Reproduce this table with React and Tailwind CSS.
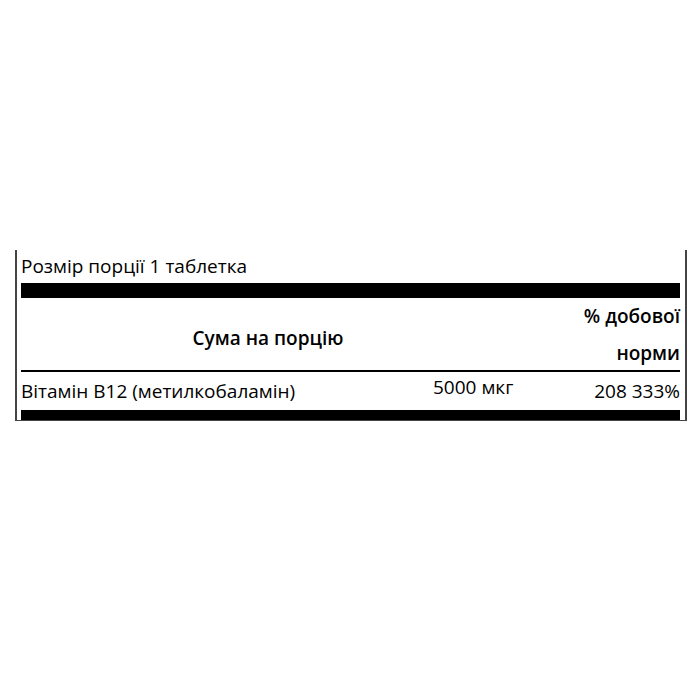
export default function App() {
  return (
    <div className="w-[700px] h-[700px] bg-white text-black overflow-hidden" style={{ fontFamily: '"Open Sans", "Noto Sans", sans-serif' }}>
      <div className="ml-[15px] mt-[250px] w-[672px] border-l-2 border-r-2 border-b border-[#444] pl-[4px] pr-[5px]">
        <div className="h-[33px] flex items-center text-[19px]">Розмір порції 1 таблетка</div>
        <div className="h-[15px] bg-black"></div>
        <div className="grid grid-cols-[494px_165px] h-[72px]">
          <div className="flex items-center justify-center font-semibold text-[19px] pt-[6px]">Сума на порцію</div>
          <div className="text-right font-semibold text-[19px] leading-[37px]">
            % добової
            <br />
            норми
          </div>
        </div>
        <div className="h-[2px] bg-black"></div>
        <div className="grid grid-cols-[412px_82px_165px] h-[38px] text-[19px]">
          <div className="flex items-center">Вітамін В12 (метилкобаламін)</div>
          <div className="flex items-center pb-[8px] whitespace-nowrap">5000 мкг</div>
          <div className="flex items-center justify-end">208 333%</div>
        </div>
        <div className="h-[10px] bg-black"></div>
      </div>
    </div>
  );
}
